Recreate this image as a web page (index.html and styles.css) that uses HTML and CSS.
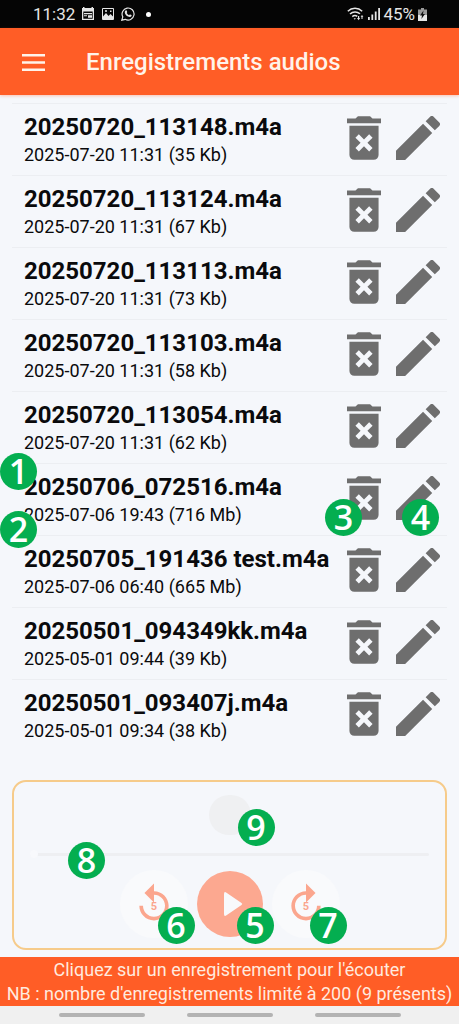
FILE: index.html
```html
<!DOCTYPE html>
<html lang="fr">
<head>
<meta charset="utf-8">
<meta name="viewport" content="width=device-width, initial-scale=1">
<title>Enregistrements audios</title>
<link rel="stylesheet" href="styles.css">
</head>
<body>
<svg class="defs" aria-hidden="true">
  <symbol id="trash" viewBox="5 3 14 18"><path d="M6 19a2 2 0 0 0 2 2h8a2 2 0 0 0 2-2V7H6zM8.46 11.88l1.41-1.41L12 12.59l2.12-2.12 1.41 1.41L13.41 14l2.12 2.12-1.41 1.41L12 15.41l-2.12 2.12-1.41-1.41L10.59 14zM19 4h-3.5l-1-1h-5l-1 1H5v1.9h14z"/></symbol>
  <symbol id="pencil" viewBox="3 3 18 18"><path d="M3 17.25V21h3.75L17.81 9.94l-3.75-3.75zM20.71 7.04a1 1 0 0 0 0-1.41l-2.34-2.34a1 1 0 0 0-1.41 0l-1.83 1.83 3.75 3.75z"/></symbol>
</svg>
<div class="app">
  <div class="status">
    <span class="clock">11:32</span>
    <svg class="mini" viewBox="0 0 14 14"><path fill-rule="evenodd" d="M1 1h12v12H1zM2.300 4.500v7.200h9.400V4.500z"/><path d="M3 6h8v1.200H3zM7 8.200h4v2.600H7zM3 8.200h3v1H3zM2 0h1.500v2H2zM10.500 0H12v2h-1.500z"/></svg>
    <svg class="mini" viewBox="0 0 14 14"><path fill-rule="evenodd" d="M2 1h10a1 1 0 0 1 1 1v10a1 1 0 0 1-1 1H2a1 1 0 0 1-1-1V2a1 1 0 0 1 1-1zM2 2v7.500L5 6l2.500 3L9.500 7 12 9.500V2zM4 3.200h2v1.600H4zM9 3.500h1.500V5H9z"/></svg>
    <svg class="mini" viewBox="0 0 14 14"><path d="M.8 13.200l1-3.300A6 6 0 1 1 4.200 12.300z" fill="none" stroke="currentColor" stroke-width="1.200"/><path d="M4.600 3.600c.8-.6 1.200 0 1.600 1.300.1.500-.5.900-.5 1.100.5 1 1.300 1.700 2.300 2.200.3 0 .7-.8 1.100-.7 1.300.5 1.800.7 1.400 1.400-.6 1.200-1.900 1.400-3.500.6-1.500-.7-2.600-1.900-3.100-3.300-.3-1.100 0-2 .7-2.600z"/></svg>
    <span class="dot"></span>
    <span class="status-end">
      <svg class="wifi" viewBox="0 0 18 14"><g fill="none" stroke="currentColor" stroke-width="1.500"><path d="M.8 4.200a10.500 10.500 0 0 1 14.400 0M3 7a7.500 7.500 0 0 1 10-.2M5.300 9.600a4 4 0 0 1 5-.3"/></g><path d="M6.600 11.200h2.300L7.800 12.800zM10 11h1V9h1.200v2h1l-1.600 2.200zM14.500 12h1V9.800h.9L15 8l-1.400 1.800h.9z"/></svg>
      <svg class="signal" viewBox="0 0 12 12"><path d="M0 9h1.800v3H0zM3.400 6.500h1.800V12H3.400zM6.800 3.500h1.800V12H6.800zM10.200 0H12v12h-1.800z"/></svg>
      <span>45%</span>
      <svg class="battery" viewBox="0 0 9 13"><path fill="#999" d="M3 0h3v1.500h3V7H0V1.500h3z"/><path d="M0 7h9v6H0z"/><path fill="#111" d="M5.500 2.500L2 7.500h2L3.400 11 7 6H5z"/></svg>
    </span>
  </div>

  <header class="topbar">
    <button class="menu" aria-label="Menu"><svg viewBox="0 0 23 17"><path d="M0 0h23v2.500H0zM0 7.200h23v2.500H0zM0 14.400h23v2.500H0z"/></svg></button>
    <h1>Enregistrements audios</h1>
  </header>

  <main class="content">
    <ul class="list">
      <li class="row"><div class="info"><h2>20250720_113148.m4a</h2><p>2025-07-20 11:31 (35 Kb)</p></div><button class="act del" aria-label="Supprimer"><svg><use href="#trash"/></svg></button><button class="act edit" aria-label="Renommer"><svg><use href="#pencil"/></svg></button></li>
      <li class="row"><div class="info"><h2>20250720_113124.m4a</h2><p>2025-07-20 11:31 (67 Kb)</p></div><button class="act del" aria-label="Supprimer"><svg><use href="#trash"/></svg></button><button class="act edit" aria-label="Renommer"><svg><use href="#pencil"/></svg></button></li>
      <li class="row"><div class="info"><h2>20250720_113113.m4a</h2><p>2025-07-20 11:31 (73 Kb)</p></div><button class="act del" aria-label="Supprimer"><svg><use href="#trash"/></svg></button><button class="act edit" aria-label="Renommer"><svg><use href="#pencil"/></svg></button></li>
      <li class="row"><div class="info"><h2>20250720_113103.m4a</h2><p>2025-07-20 11:31 (58 Kb)</p></div><button class="act del" aria-label="Supprimer"><svg><use href="#trash"/></svg></button><button class="act edit" aria-label="Renommer"><svg><use href="#pencil"/></svg></button></li>
      <li class="row"><div class="info"><h2>20250720_113054.m4a</h2><p>2025-07-20 11:31 (62 Kb)</p></div><button class="act del" aria-label="Supprimer"><svg><use href="#trash"/></svg></button><button class="act edit" aria-label="Renommer"><svg><use href="#pencil"/></svg></button></li>
      <li class="row"><div class="info"><h2>20250706_072516.m4a</h2><p>2025-07-06 19:43 (716 Mb)</p></div><button class="act del" aria-label="Supprimer"><svg><use href="#trash"/></svg><span class="badge b3">3</span></button><button class="act edit" aria-label="Renommer"><svg><use href="#pencil"/></svg><span class="badge b4">4</span></button><span class="badge b1">1</span><span class="badge b2">2</span></li>
      <li class="row"><div class="info"><h2>20250705_191436 test.m4a</h2><p>2025-07-06 06:40 (665 Mb)</p></div><button class="act del" aria-label="Supprimer"><svg><use href="#trash"/></svg></button><button class="act edit" aria-label="Renommer"><svg><use href="#pencil"/></svg></button></li>
      <li class="row"><div class="info"><h2>20250501_094349kk.m4a</h2><p>2025-05-01 09:44 (39 Kb)</p></div><button class="act del" aria-label="Supprimer"><svg><use href="#trash"/></svg></button><button class="act edit" aria-label="Renommer"><svg><use href="#pencil"/></svg></button></li>
      <li class="row"><div class="info"><h2>20250501_093407j.m4a</h2><p>2025-05-01 09:34 (38 Kb)</p></div><button class="act del" aria-label="Supprimer"><svg><use href="#trash"/></svg></button><button class="act edit" aria-label="Renommer"><svg><use href="#pencil"/></svg></button></li>
    </ul>

    <section class="player" aria-label="Lecteur">
      <div class="time"><span class="badge b9">9</span></div>
      <div class="seek"><input type="range" min="0" max="100" value="0" aria-label="Position"><span class="badge b8">8</span></div>
      <div class="controls">
        <button class="skip" aria-label="Reculer de 5 secondes">
          <svg viewBox="0 0 24 24"><path d="M12 5V.8L6.800 6l5.200 5.200V7c3.300 0 6 2.700 6 6s-2.700 6-6 6-6-2.700-6-6H4c0 4.400 3.600 8 8 8s8-3.600 8-8-3.600-8-8-8z"/><text x="12" y="15.500">5</text></svg>
          <span class="badge b6">6</span>
        </button>
        <button class="play" aria-label="Lecture">
          <svg viewBox="0 0 20 26"><path d="M1 3v20q0 3 2.500 1.300L18.500 14q1.500-1 0-2L3.500 1.700Q1 0 1 3z"/></svg>
          <span class="badge b5">5</span>
        </button>
        <button class="skip" aria-label="Avancer de 5 secondes">
          <svg viewBox="0 0 24 24"><path d="M12 5V.8L17.200 6 12 11.200V7c-3.300 0-6 2.700-6 6s2.700 6 6 6 6-2.700 6-6h2c0 4.400-3.600 8-8 8s-8-3.600-8-8 3.600-8 8-8z"/><text x="12" y="15.500">5</text></svg>
          <span class="badge b7">7</span>
        </button>
      </div>
    </section>
  </main>

  <footer class="hint">
    <p>Cliquez sur un enregistrement pour l'écouter</p>
    <p>NB : nombre d'enregistrements limité à 200 (9 présents)</p>
  </footer>
  <div class="gestures"><span></span><span></span><span></span></div>
</div>
</body>
</html>
```
FILE: styles.css
```css
* { box-sizing: border-box; }

body {
  margin: 0;
  background: #f5f7fb;
  color: #0a0a0c;
  font-family: Roboto, "Liberation Sans", sans-serif;
}

h1, h2, p, ul { margin: 0; padding: 0; }

button {
  border: 0;
  padding: 0;
  background: none;
  color: inherit;
  font: inherit;
}

svg { display: block; fill: currentColor; }

.defs { position: absolute; width: 0; height: 0; }

.app {
  display: flex;
  flex-direction: column;
  min-height: 100vh;
}

.status {
  display: flex;
  align-items: center;
  gap: 6px;
  height: 28px;
  padding: 0 32px 0 33px;
  background: #050505;
  color: #e6e6e6;
  font-size: 17px;
  line-height: 28px;
}

.mini { width: 14px; height: 14px; }
.dot { width: 5px; height: 5px; margin-left: 5px; border-radius: 50%; background: #fff; }
.status-end { display: flex; align-items: center; gap: 3px; margin-left: auto; }
.wifi { width: 18px; height: 14px; }
.signal { width: 12px; height: 12px; }
.battery { width: 9px; height: 13px; }

.topbar {
  display: flex;
  align-items: center;
  gap: 41px;
  height: 67px;
  padding: 1px 22px 0;
  background: #ff5d26;
  color: #fff3ea;
  box-shadow: 0 1px 3px #ff5d2655;
}

.topbar h1 { font-size: 24px; font-weight: 500; line-height: 28px; }
.menu svg { width: 23px; height: 17px; }

.content {
  display: flex;
  flex: 1;
  flex-direction: column;
  justify-content: space-between;
  padding: 8px 12px 7px;
}

.list { list-style: none; }

.row {
  position: relative;
  display: flex;
  align-items: center;
  height: 72px;
  padding: 0 7px 3px 12px;
  border-top: 1px solid #eceef2;
}

.info { flex: 1; min-width: 0; padding-top: 3px; white-space: nowrap; }
.info h2 { font-size: 24px; font-weight: 700; line-height: 30px; }
.info p { font-size: 18px; line-height: 26px; }

.act { position: relative; flex: none; color: #6e6e6e; }
.act svg { width: 100%; height: 100%; }
.del { width: 34px; height: 44px; }
.edit { width: 44px; height: 44px; margin-left: 15px; }

.badge {
  position: absolute;
  z-index: 1;
  width: 37px;
  height: 37px;
  border-radius: 50%;
  background: #04ae50;
  color: #fff;
  font: 600 34px/36px "Open Sans", "Noto Sans", sans-serif;
  text-align: center;
}

.b1 { left: -12px; top: -11px; }
.b2 { left: -12px; top: 47px; }
.b3 { left: -22px; top: 23px; }
.b4 { left: 6px; top: 23px; }
.b5 { left: 40px; top: 36px; }
.b6 { left: 38px; top: 37px; }
.b7 { left: 38px; top: 37px; }
.b8 { left: 38px; top: -6px; }
.b9 { left: 29px; top: 14px; }

.player {
  display: flex;
  flex-direction: column;
  align-items: center;
  height: 170px;
  padding: 13px 16px 0;
  border: 2px solid #f6cb8a;
  border-radius: 14px;
}

.time {
  position: relative;
  width: 42px;
  height: 40px;
  border-radius: 20px;
  background: #eff0f2;
}

.seek { position: relative; width: 100%; height: 12px; margin-top: 13px; }

.seek input {
  display: block;
  width: 100%;
  height: 12px;
  margin: 0;
  background: none;
  appearance: none;
}

.seek input::-webkit-slider-runnable-track { height: 3px; border-radius: 2px; background: #eeeff2; }

.seek input::-webkit-slider-thumb {
  width: 8px;
  height: 8px;
  margin-top: -3px;
  border-radius: 50%;
  background: #f8f9fc;
  appearance: none;
}

.controls { display: flex; align-items: center; gap: 9px; margin-top: 10px; }

.skip {
  position: relative;
  display: grid;
  place-items: center;
  width: 68px;
  height: 68px;
  border-radius: 50%;
  background: #f9fafc;
  color: #fba68e;
}

.skip svg { width: 44px; height: 44px; }
.skip text { font-size: 6px; font-weight: 700; text-anchor: middle; }

.play {
  position: relative;
  display: grid;
  place-items: center;
  width: 66px;
  height: 66px;
  border-radius: 50%;
  background: #fca890;
  color: #f8f9fc;
}

.play svg { width: 20px; height: 26px; margin-left: 6px; }

.hint {
  padding: 1px 4px 0;
  background: #ff5d26;
  color: #ffeadf;
  font-size: 18px;
  line-height: 24px;
  text-align: center;
}

.gestures {
  display: flex;
  justify-content: center;
  gap: 42px;
  height: 18px;
  padding-top: 7px;
  background: #f0f0f0;
}

.gestures span { width: 86px; height: 4px; border-radius: 2px; background: #b3b3b3; }
```
